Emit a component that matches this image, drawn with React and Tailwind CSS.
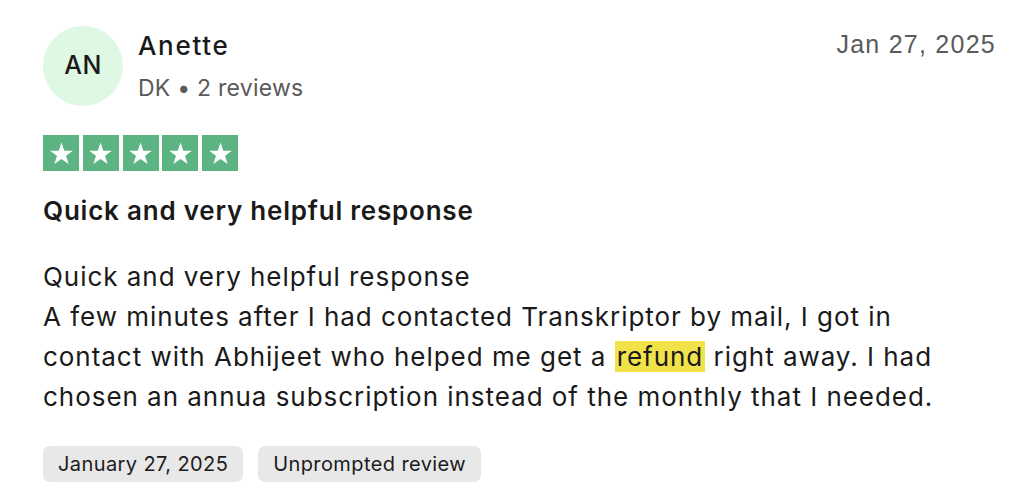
import React from 'react';

const Star = () => (
  <div className="w-[36px] h-[36px] bg-[#5bb482] flex items-center justify-center">
    <svg width="27" height="27" viewBox="0 0 24 24">
      <path
        d="M12 2.2l2.5 7.3h7.7l-6.2 4.5 2.4 7.4L12 16.9l-6.4 4.5 2.4-7.4-6.2-4.5h7.7z"
        fill="#fff"
      />
    </svg>
  </div>
);

const Chip = ({ children }) => (
  <span className="bg-[#e8e8e8] rounded-[7px] px-[15px] h-[36px] flex items-center text-[20px] tracking-[0.02em] text-[#1c1c1c]">
    {children}
  </span>
);

export default function App() {
  return (
    <div className="bg-white w-[1011px] h-[490px] overflow-hidden font-[family-name:Inter] text-[#1a1a1a]">
      <div className="pl-[43px] pr-[15px] pt-[26px]">
        <div className="flex items-start justify-between">
          <div className="flex items-center gap-[15px]">
            <div className="w-[80px] h-[80px] rounded-full bg-[#dff8e3] flex items-center justify-center text-[25px] font-medium tracking-[0.02em]">
              AN
            </div>
            <div className="flex flex-col">
              <span className="text-[26px] leading-[36px] font-medium tracking-[0.065em]">Anette</span>
              <span className="text-[23px] leading-[34px] tracking-[0.01em] text-[#5a5a5a] mt-[7px]">DK • 2 reviews</span>
            </div>
          </div>
          <span className="font-[family-name:'Liberation_Sans'] text-[25px] leading-[36px] tracking-[0.05em] text-[#5a5a5a]">
            Jan 27, 2025
          </span>
        </div>

        <div className="flex gap-[3.75px] mt-[29px]">
          <Star />
          <Star />
          <Star />
          <Star />
          <Star />
        </div>

        <h2 className="text-[26px] leading-[36px] font-semibold tracking-[0.03em] mt-[22px]">
          Quick and very helpful response
        </h2>

        <p className="text-[26px] leading-[40px] tracking-[0.037em] mt-[28px] w-[910px]">
          Quick and very helpful response
          <br />
          A few minutes after I had contacted Transkriptor by mail, I got in contact with Abhijeet who helped me get a{' '}
          <span className="bg-[#f1e24a] px-[2px]">refund</span> right away. I had chosen an annua subscription instead of the monthly that I needed.
        </p>

        <div className="flex gap-[15px] mt-[29px]">
          <Chip>January 27, 2025</Chip>
          <Chip>Unprompted review</Chip>
        </div>
      </div>
    </div>
  );
}
